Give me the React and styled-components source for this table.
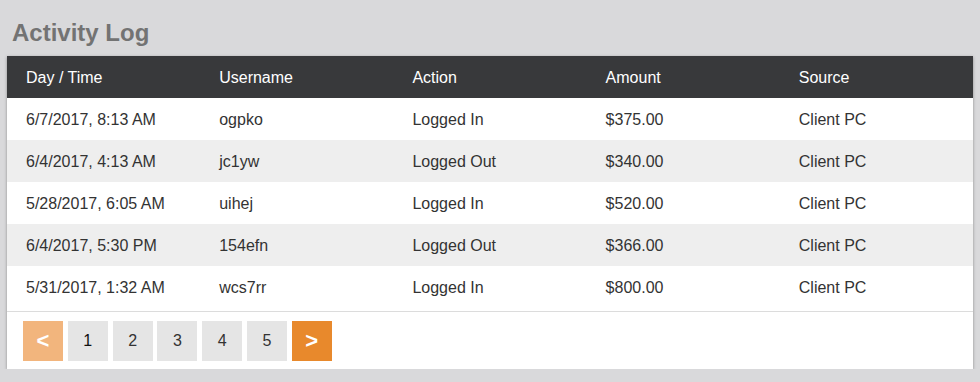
import React from "react";
import styled, { createGlobalStyle } from "styled-components";

const rows = [
  { time: "6/7/2017, 8:13 AM", user: "ogpko", action: "Logged In", amount: "$375.00", source: "Client PC" },
  { time: "6/4/2017, 4:13 AM", user: "jc1yw", action: "Logged Out", amount: "$340.00", source: "Client PC" },
  { time: "5/28/2017, 6:05 AM", user: "uihej", action: "Logged In", amount: "$520.00", source: "Client PC" },
  { time: "6/4/2017, 5:30 PM", user: "154efn", action: "Logged Out", amount: "$366.00", source: "Client PC" },
  { time: "5/31/2017, 1:32 AM", user: "wcs7rr", action: "Logged In", amount: "$800.00", source: "Client PC" },
];

const GlobalStyle = createGlobalStyle`
  body {
    margin: 0;
    background: #d9d9db;
    font-family: "Liberation Sans", Arial, sans-serif;
  }
`;

const Page = styled.div`
  padding: 19px 7px 0 7px;
`;

const Title = styled.h1`
  margin: 0 0 9px 5px;
  font-size: 24px;
  line-height: 28px;
  font-weight: bold;
  color: #737373;
`;

const Card = styled.div`
  width: 966px;
  background: #fff;
  box-shadow: 0 1px 3px rgba(0, 0, 0, 0.35);
`;

const Grid = styled.div`
  display: grid;
  grid-template-columns: repeat(5, 1fr);
  align-items: center;
  height: 42px;
  padding-top: 1px;
  box-sizing: border-box;
  background: ${(p) => (p.$head ? "#38393b" : p.$alt ? "#eeeeee" : "#fff")};
  color: ${(p) => (p.$head ? "#fff" : "#333")};
  font-size: 16px;
`;

const Cell = styled.div`
  padding-left: 19px;
  white-space: nowrap;
`;

const Pager = styled.div`
  display: flex;
  gap: 4.8px;
  margin-top: 3px;
  border-top: 1px solid #dcdcdc;
  padding: 9px 16px 8px;
`;

const PageBtn = styled.button`
  width: 40px;
  height: 40px;
  border: none;
  padding: 0;
  font-family: inherit;
  font-size: ${(p) => (p.$arrow ? "22px" : "16px")};
  font-weight: ${(p) => (p.$arrow ? "bold" : "normal")};
  color: ${(p) => (p.$arrow ? "#fff" : p.$active ? "#111" : "#333")};
  background: ${(p) =>
    p.$arrow ? (p.$dim ? "#f2b57d" : "#e8892c") : "#e5e5e5"};
`;

export default function App() {
  return (
    <Page>
      <GlobalStyle />
      <Title>Activity Log</Title>
      <Card>
        <Grid $head>
          <Cell>Day / Time</Cell>
          <Cell>Username</Cell>
          <Cell>Action</Cell>
          <Cell>Amount</Cell>
          <Cell>Source</Cell>
        </Grid>
        {rows.map((r, i) => (
          <Grid key={i} $alt={i % 2 === 1}>
            <Cell>{r.time}</Cell>
            <Cell>{r.user}</Cell>
            <Cell>{r.action}</Cell>
            <Cell>{r.amount}</Cell>
            <Cell>{r.source}</Cell>
          </Grid>
        ))}
        <Pager>
          <PageBtn $arrow $dim>&lt;</PageBtn>
          {[1, 2, 3, 4, 5].map((n) => (
            <PageBtn key={n} $active={n === 1}>
              {n}
            </PageBtn>
          ))}
          <PageBtn $arrow>&gt;</PageBtn>
        </Pager>
      </Card>
    </Page>
  );
}
